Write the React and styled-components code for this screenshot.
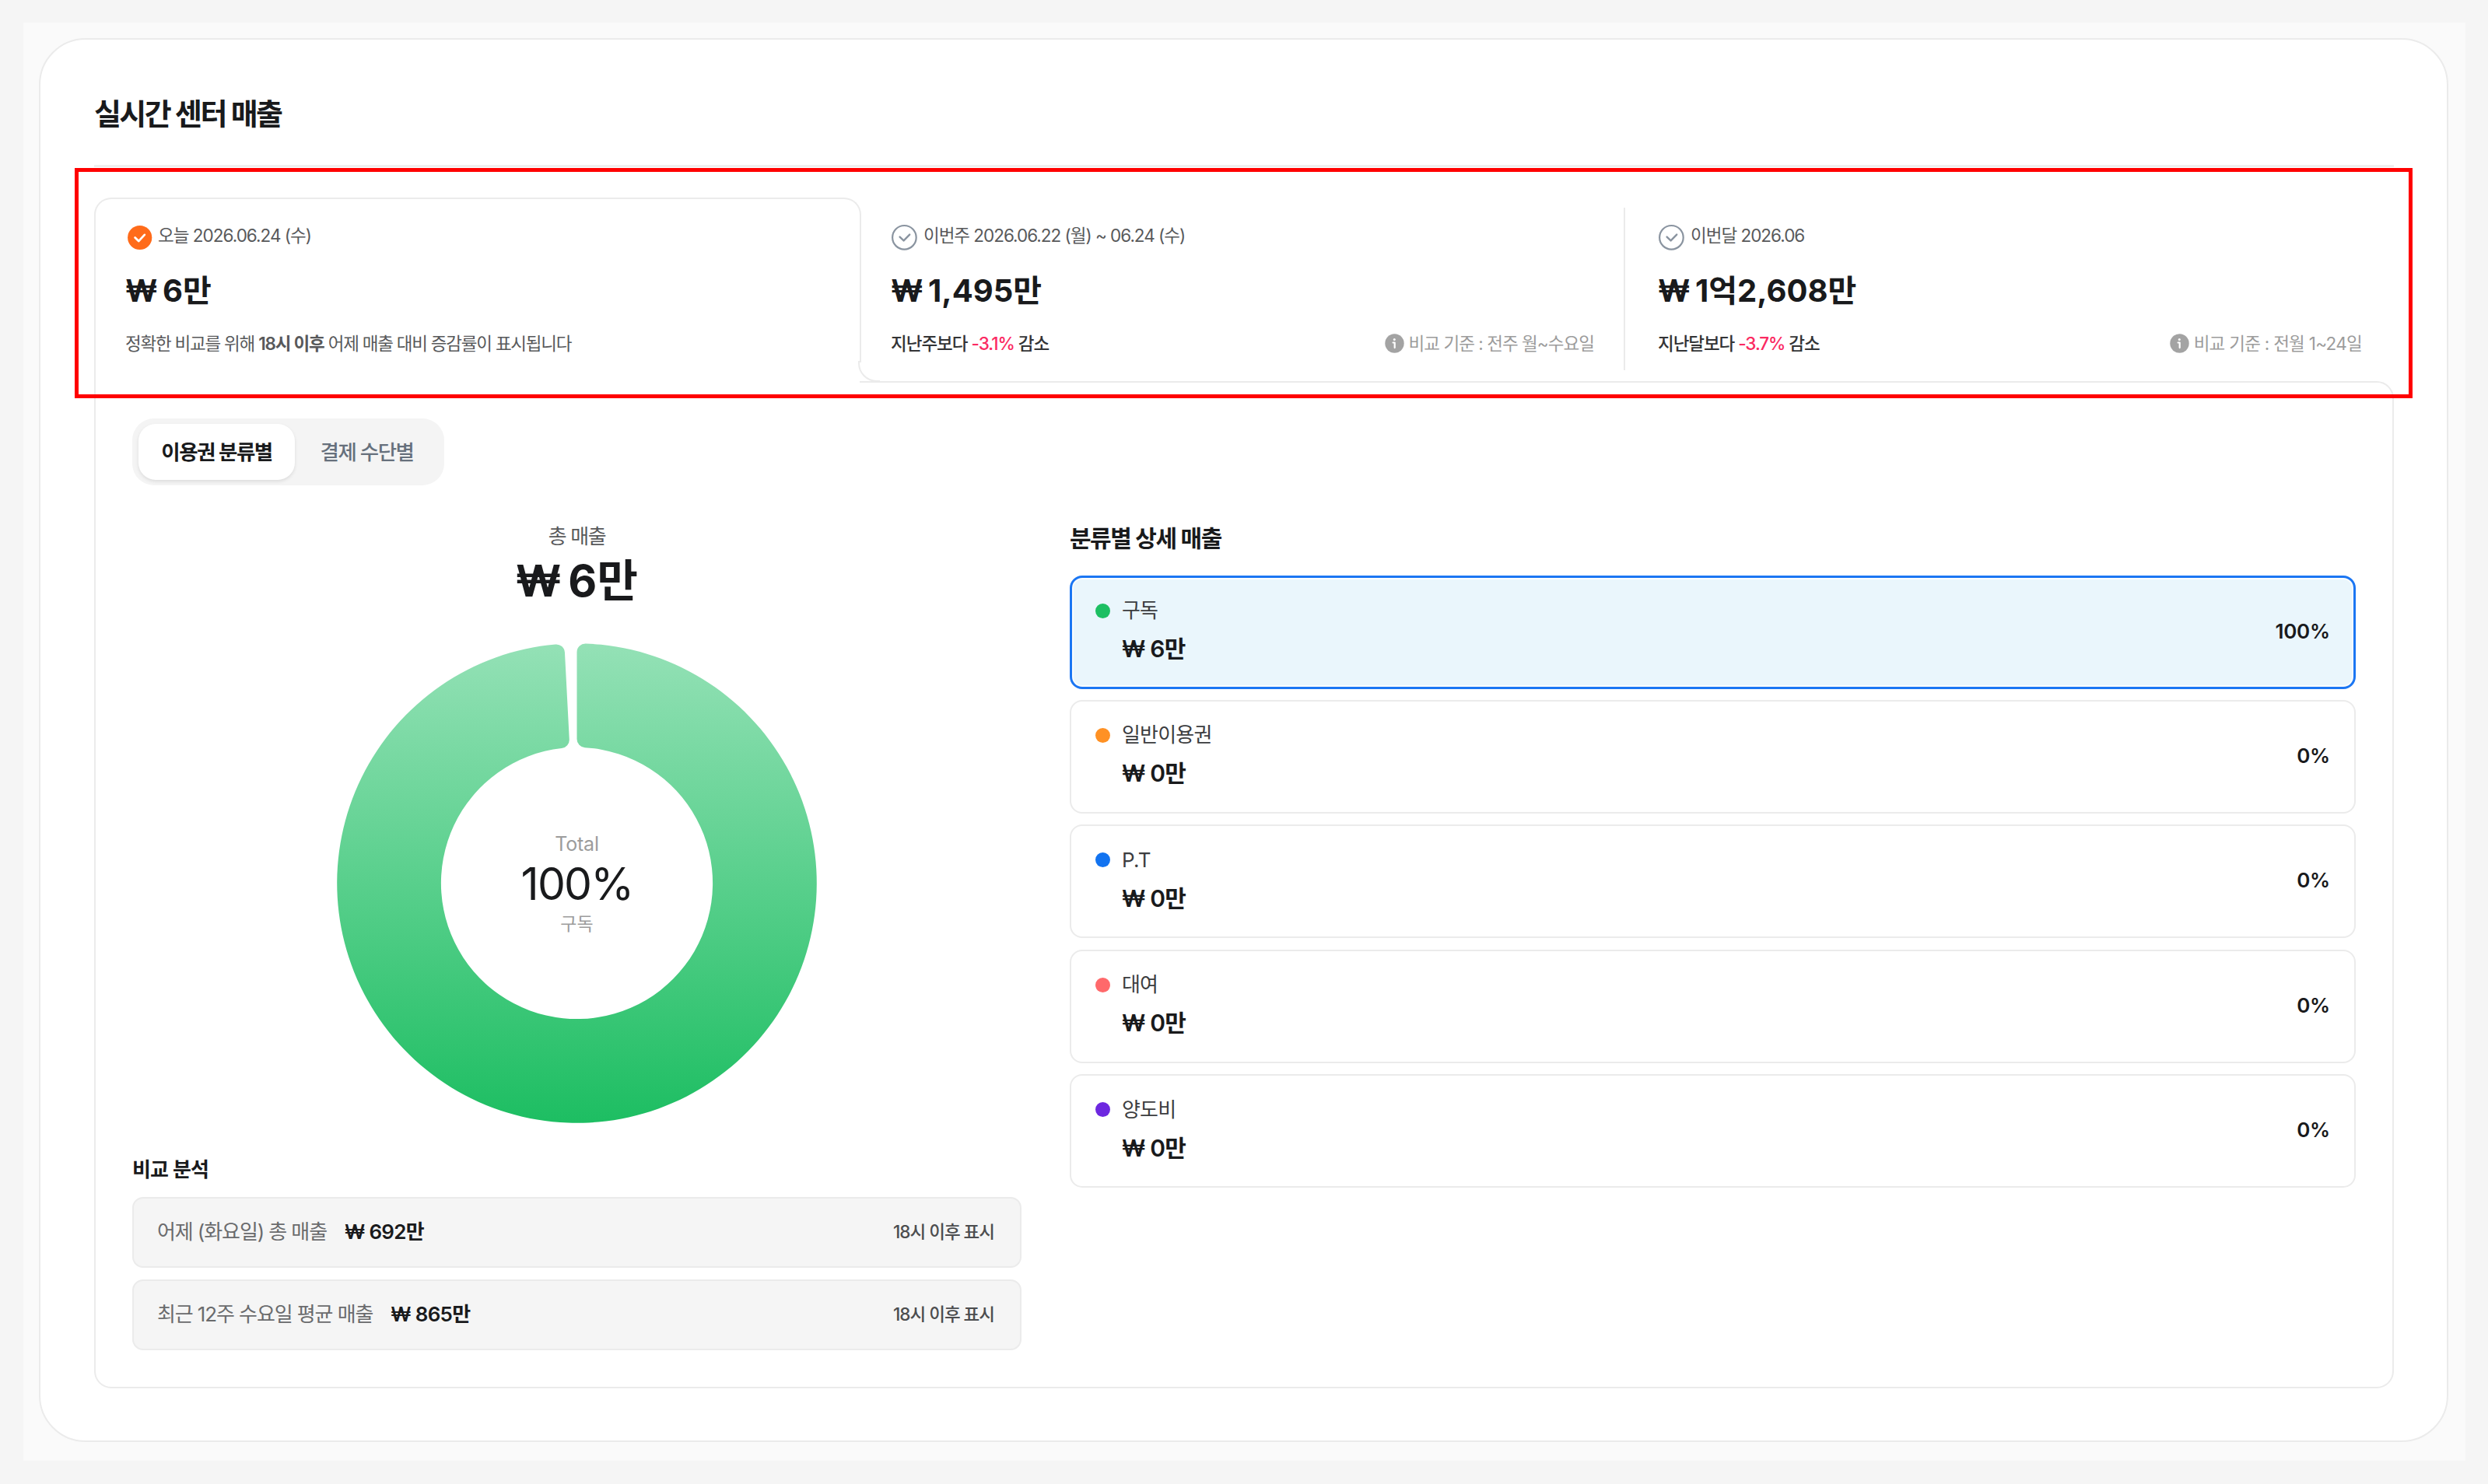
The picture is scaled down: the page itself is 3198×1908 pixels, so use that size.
import React from "react";
import styled, { createGlobalStyle, css } from "styled-components";

const LINE = "#ebebeb";
const INK = "#191a1c";

const GlobalStyle = createGlobalStyle`
  * { box-sizing: border-box; }
  body {
    margin: 0;
    background: #f5f5f5;
    color: ${INK};
    font-family: Inter, "Noto Sans CJK KR", sans-serif;
  }
`;

const Page = styled.main`
  position: relative;
  width: 3198px;
  height: 1908px;
  padding: 29px 29px 30px 30px;
  background: #f5f5f5;
`;

const Backdrop = styled.div`
  height: 100%;
  padding: 20px 22px 24px 20px;
  background: #fafafa;
`;

const Card = styled.section`
  height: 100%;
  padding: 71px 68px 0 69px;
  border: 2px solid ${LINE};
  border-radius: 60px;
  background: #fff;
`;

const Text = styled.span`
  display: block;
  flex: none;
  margin: 0;
  white-space: pre;
  font-size: ${(p) => p.$size}px;
  line-height: ${(p) => p.$line}px;
  font-weight: ${(p) => p.$weight || 400};
  letter-spacing: ${(p) => p.$track || 0}px;
  word-spacing: ${(p) => p.$word || 0}px;
  color: ${(p) => p.$color || INK};
`;

const Rule = styled.hr`
  height: 3px;
  margin: 42px 0 39px;
  border: 0;
  background: #efefef;
`;

const Highlight = styled.div`
  position: absolute;
  left: 96px;
  top: 216px;
  width: 3005px;
  height: 296px;
  border: 5px solid #ff0000;
  z-index: 3;
`;

const Tabs = styled.div`
  display: grid;
  grid-template-columns: 986px 980px 2px 1fr;
  height: 236px;
`;

const Tab = styled.article`
  padding: 33px ${(p) => p.$right || 38}px 0 ${(p) => p.$left || 38}px;
  ${(p) =>
    p.$active &&
    css`
      position: relative;
      z-index: 1;
      margin-bottom: -2px;
      padding-top: 31px;
      border: 2px solid ${LINE};
      border-bottom: 0;
      border-radius: 22px 22px 0 0;
      background: #fff;

      &::before {
        content: "";
        position: absolute;
        right: -2px;
        bottom: 2px;
        width: 2px;
        height: 24px;
        background: #fff;
      }

      &::after {
        content: "";
        position: absolute;
        right: -26px;
        bottom: 1px;
        width: 26px;
        height: 25px;
        border: solid ${LINE};
        border-width: 0 0 2px 2px;
        border-bottom-left-radius: 24px;
      }
    `}
`;

const TabDivider = styled.div`
  margin: 13px 0 14px;
  background: ${LINE};
`;

const TabDate = styled.div`
  display: flex;
  align-items: center;
  gap: 5px;
  height: 37px;

  span { margin-bottom: 6px; }
`;

const TabAmount = styled.div`
  margin-top: 21.5px;
`;

const TabFoot = styled.div`
  display: flex;
  align-items: center;
  justify-content: space-between;
  margin-top: 25px;
`;

const Strong = styled.b`
  font-weight: 600;
`;

const Delta = styled.em`
  font-style: normal;
  color: #fb2a62;
`;

const Basis = styled.div`
  display: flex;
  align-items: center;
  gap: 6px;
`;

const Panel = styled.div`
  height: 1295px;
  padding: 46px 47px 0;
  border: 2px solid ${LINE};
  border-radius: 0 22px 22px 22px;
`;

const Toggle = styled.div`
  display: flex;
  width: 401px;
  height: 86px;
  padding: 7px 7px 7px 8px;
  border-radius: 28px;
  background: #f4f4f4;
`;

const ToggleItem = styled.button`
  display: flex;
  align-items: center;
  justify-content: center;
  width: ${(p) => (p.$active ? 201 : 185)}px;
  padding: 0;
  border: 0;
  border-radius: 22px;
  font-family: inherit;
  background: ${(p) => (p.$active ? "#fff" : "transparent")};
  box-shadow: ${(p) => (p.$active ? "0 2px 4px rgba(0, 0, 0, 0.1)" : "none")};
`;

const Columns = styled.div`
  display: grid;
  grid-template-columns: 1143px 1653px;
  gap: 62px;
`;

const Summary = styled.div`
  display: flex;
  flex-direction: column;
  padding-top: 48.5px;
`;

const Total = styled.div`
  display: flex;
  flex-direction: column;
  align-items: center;
  gap: 5px;
`;

const DonutStack = styled.div`
  display: grid;
  justify-items: center;
  align-items: center;
  height: 617px;
  margin: 45px 0 43px;

  > * { grid-area: 1 / 1; }
`;

const DonutLabel = styled.div`
  display: flex;
  flex-direction: column;
  align-items: center;
  gap: 6.5px;
  padding-top: 3px;
`;

const CompareList = styled.div`
  display: flex;
  flex-direction: column;
  gap: 15.4px;
  margin-top: 18px;
`;

const CompareRow = styled.div`
  display: flex;
  align-items: center;
  justify-content: space-between;
  height: 91px;
  padding: 0 33px 0 30px;
  border: 2px solid ${LINE};
  border-radius: 14px;
  background: #f5f5f5;
`;

const Pair = styled.div`
  display: flex;
  align-items: center;
  gap: 23px;
`;

const Details = styled.div`
  padding-top: 48px;
`;

const DetailList = styled.div`
  display: flex;
  flex-direction: column;
  gap: 14.4px;
  margin-top: 27.5px;
`;

const DetailCard = styled.div`
  display: flex;
  align-items: center;
  justify-content: space-between;
  height: 146px;
  padding: 0 31px 2px;
  border: 2px solid ${LINE};
  border-radius: 16px;
  ${(p) =>
    p.$selected &&
    css`
      padding: 0 30px 2px;
      border: 3px solid #1b76f3;
      background: #eaf6fc;
      box-shadow: inset 0 0 0 2px rgba(255, 255, 255, 0.7);
    `}
`;

const DetailInfo = styled.div`
  display: grid;
  grid-template-columns: 19px auto;
  column-gap: 15px;
  row-gap: 11px;
  align-items: center;

  > :last-child { grid-column: 2; }
`;

const Dot = styled.i`
  width: 19px;
  height: 19px;
  border-radius: 50%;
  background: ${(p) => p.$color};
`;

function CheckIcon({ filled }) {
  return filled ? (
    <svg width="37" height="37" viewBox="0 0 37 37" fill="none">
      <circle cx="18.7" cy="18.5" r="15.6" fill="#ff6b1a" />
      <path d="M12.6 18.6l4.6 4.5 7.6-8.2" stroke="#fff" strokeWidth="2.8" strokeLinecap="round" strokeLinejoin="round" />
    </svg>
  ) : (
    <svg width="37" height="37" viewBox="0 0 37 37" fill="none">
      <circle cx="17.4" cy="18.3" r="15.3" stroke="#8a94a0" strokeWidth="2.2" />
      <path d="M11.6 17.6l5 4.8 7.6-7.8" stroke="#8a94a0" strokeWidth="2.4" strokeLinecap="round" strokeLinejoin="round" />
    </svg>
  );
}

function InfoIcon() {
  return (
    <svg width="25" height="25" viewBox="0 0 25 25" fill="none">
      <circle cx="12.5" cy="12.5" r="12.2" fill="#a3a3a3" />
      <circle cx="12.3" cy="7.4" r="1.5" fill="#fff" />
      <path d="M10.6 11.5h2.1v6.6" stroke="#fff" strokeWidth="2.2" strokeLinecap="round" strokeLinejoin="round" />
    </svg>
  );
}

// Ring sector with rounded corners; angles run clockwise from twelve o'clock.
function sectorPath(c, inner, outer, from, to, corner) {
  const at = (r, a) => `${(c + r * Math.sin(a)).toFixed(2)} ${(c - r * Math.cos(a)).toFixed(2)}`;
  const dOut = Math.asin(corner / (outer - corner));
  const dIn = Math.asin(corner / (inner + corner));
  const sideOut = (outer - corner) * Math.cos(dOut);
  const sideIn = (inner + corner) * Math.cos(dIn);
  const k = `A ${corner} ${corner} 0 0 1`;
  return [
    `M ${at(sideOut, from)}`,
    `${k} ${at(outer, from + dOut)}`,
    `A ${outer} ${outer} 0 1 1 ${at(outer, to - dOut)}`,
    `${k} ${at(sideOut, to)}`,
    `L ${at(sideIn, to)}`,
    `${k} ${at(inner, to - dIn)}`,
    `A ${inner} ${inner} 0 1 0 ${at(inner, from + dIn)}`,
    `${k} ${at(sideIn, from)}`,
    "Z",
  ].join(" ");
}

const DONUT = sectorPath(308.5, 174.6, 308.3, 0, (357 * Math.PI) / 180, 11);

function Donut() {
  return (
    <svg width="617" height="617" viewBox="0 0 617 617">
      <defs>
        <linearGradient id="ring" x1="0" y1="0" x2="0" y2="1">
          <stop offset="0" stopColor="#94e1b6" />
          <stop offset="1" stopColor="#1dbe62" />
        </linearGradient>
      </defs>
      <path d={DONUT} fill="url(#ring)" />
    </svg>
  );
}

const details = [
  { name: "구독", amount: "₩ 6만", share: "100%", color: "#1dbf62", selected: true },
  { name: "일반이용권", amount: "₩ 0만", share: "0%", color: "#ff9124" },
  { name: "P.T", amount: "₩ 0만", share: "0%", color: "#1273f0" },
  { name: "대여", amount: "₩ 0만", share: "0%", color: "#ff696b" },
  { name: "양도비", amount: "₩ 0만", share: "0%", color: "#6d28e0" },
];

const comparisons = [
  { label: "어제 (화요일) 총 매출", amount: "₩ 692만" },
  { label: "최근 12주 수요일 평균 매출", amount: "₩ 865만" },
];

function PeriodTab({ active, left, right, date, dateTrack, amount, note, noteTrack, noteColor, noteWeight, basis, basisTrack }) {
  return (
    <Tab $active={active} $left={left} $right={right}>
      <TabDate>
        <CheckIcon filled={active} />
        <Text $size={22.5} $line={30} $track={dateTrack} $color="#58595b">{date}</Text>
      </TabDate>
      <TabAmount>
        <Text $size={40} $line={56} $weight={700} $word={-3}>{amount}</Text>
      </TabAmount>
      <TabFoot>
        <Text $size={22.5} $line={30} $weight={noteWeight} $track={noteTrack} $color={noteColor}>{note}</Text>
        {basis && (
          <Basis>
            <InfoIcon />
            <Text $size={22.5} $line={30} $track={basisTrack} $color="#9c9c9c">{basis}</Text>
          </Basis>
        )}
      </TabFoot>
    </Tab>
  );
}

export default function App() {
  return (
    <Page>
      <GlobalStyle />
      <Backdrop>
        <Card>
          <Text as="h1" $size={38} $line={48} $weight={600} $track={-2.6}>실시간 센터 매출</Text>
          <Rule />
          <Tabs>
            <PeriodTab
              active
              date="오늘 2026.06.24 (수)"
              dateTrack={-0.98}
              amount="₩ 6만"
              note={<>정확한 비교를 위해 <Strong>18시 이후</Strong> 어제 매출 대비 증감률이 표시됩니다</>}
              noteTrack={-1.22}
              noteColor="#58595b"
            />
            <PeriodTab
              date="이번주 2026.06.22 (월) ~ 06.24 (수)"
              dateTrack={-1.02}
              amount="₩ 1,495만"
              note={<>지난주보다 <Delta>-3.1%</Delta> 감소</>}
              noteTrack={-1}
              noteWeight={500}
              noteColor="#333436"
              basis="비교 기준 : 전주 월~수요일"
              basisTrack={-0.95}
            />
            <TabDivider />
            <PeriodTab
              left={42}
              right={41}
              date="이번달 2026.06"
              dateTrack={-1}
              amount="₩ 1억2,608만"
              note={<>지난달보다 <Delta>-3.7%</Delta> 감소</>}
              noteTrack={-1.05}
              noteWeight={500}
              noteColor="#333436"
              basis="비교 기준 : 전월 1~24일"
              basisTrack={-0.72}
            />
          </Tabs>
          <Panel>
            <Toggle>
              <ToggleItem $active>
                <Text $size={26.5} $line={34} $weight={600} $track={-1.5}>이용권 분류별</Text>
              </ToggleItem>
              <ToggleItem>
                <Text $size={26.5} $line={34} $weight={500} $track={-1.5} $color="#66707c">결제 수단별</Text>
              </ToggleItem>
            </Toggle>
            <Columns>
              <Summary>
                <Total>
                  <Text $size={26} $line={34} $track={-1.4} $color="#58595b">총 매출</Text>
                  <Text $size={57} $line={70} $weight={700} $track={0.4} $word={-6}>₩ 6만</Text>
                </Total>
                <DonutStack>
                  <Donut />
                  <DonutLabel>
                    <Text $size={25} $line={30} $track={-0.2} $color="#9c9c9c">Total</Text>
                    <Text $size={57} $line={60} $track={-1.8}>100%</Text>
                    <Text $size={23} $line={30} $color="#9c9c9c">구독</Text>
                  </DonutLabel>
                </DonutStack>
                <Text $size={26} $line={34} $weight={600} $track={-0.8}>비교 분석</Text>
                <CompareList>
                  {comparisons.map((c) => (
                    <CompareRow key={c.label}>
                      <Pair>
                        <Text $size={26} $line={34} $track={-1.1} $color="#6a6b6d">{c.label}</Text>
                        <Text $size={26} $line={34} $weight={600} $track={-0.7}>{c.amount}</Text>
                      </Pair>
                      <Text $size={22.5} $line={30} $weight={500} $track={-1} $color="#4c4d4f">18시 이후 표시</Text>
                    </CompareRow>
                  ))}
                </CompareList>
              </Summary>
              <Details>
                <Text $size={30} $line={40} $weight={600} $track={-1.5}>분류별 상세 매출</Text>
                <DetailList>
                  {details.map((d) => (
                    <DetailCard key={d.name} $selected={d.selected}>
                      <DetailInfo>
                        <Dot $color={d.color} />
                        <Text $size={26} $line={34} $track={-0.8} $color="#3c3d3f">{d.name}</Text>
                        <Text $size={30} $line={42} $weight={600} $track={-0.8}>{d.amount}</Text>
                      </DetailInfo>
                      <Text $size={26} $line={34} $weight={600} $track={-0.2}>{d.share}</Text>
                    </DetailCard>
                  ))}
                </DetailList>
              </Details>
            </Columns>
          </Panel>
        </Card>
      </Backdrop>
      <Highlight />
    </Page>
  );
}
